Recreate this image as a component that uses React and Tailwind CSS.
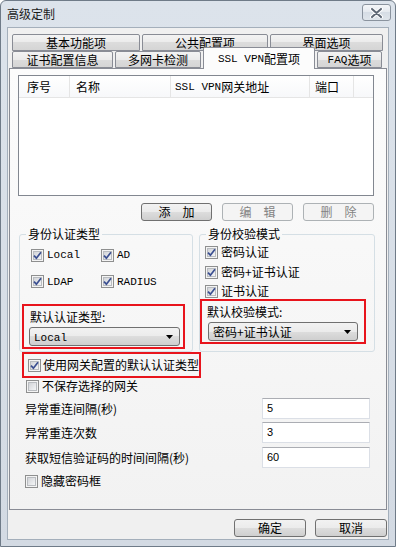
import React from 'react';

const CJK = "font-['Noto_Sans_CJK_SC','Liberation_Sans',sans-serif]";
const MONO = "font-['Liberation_Mono','Noto_Sans_CJK_SC',monospace] text-[11px]";

// win7 style checkbox
function Check({ checked = false }) {
  return (
    <span className="w-[13px] h-[13px] shrink-0 flex items-center justify-center border border-[#8e8f8f] bg-[#f4f4f4]">
      <span className="w-[9px] h-[9px] flex items-center justify-center border border-[#b9bcc0] bg-gradient-to-br from-[#d2d4d8] to-[#f4f5f6]">
        {checked && (
          <svg width="9" height="9" viewBox="0 0 9 9" className="overflow-visible">
            <path d="M1 4.6 L3.4 7.2 L8 1.2" fill="none" stroke="#3b4f91" strokeWidth="1.7" />
          </svg>
        )}
      </span>
    </span>
  );
}

function Combo({ children, w }) {
  return (
    <div
      className={`h-[19px] flex items-center justify-between pl-[4px] pr-[6px] border border-[#707070] rounded-[3px] bg-[linear-gradient(#f2f2f2,#ebebeb_50%,#dddddd_50%,#cfcfcf)] ${w}`}
    >
      <span className="leading-[14px]">{children}</span>
      <svg width="7" height="4" viewBox="0 0 7 4">
        <path d="M0 0H7L3.5 4Z" fill="#000" />
      </svg>
    </div>
  );
}

function Btn({ children, disabled, w = 'w-[71px]' }) {
  return (
    <div
      className={`h-[18px] flex items-center justify-center rounded-[3px] border leading-[14px] ${w} ${
        disabled
          ? 'border-[#adb2b5] bg-[#f4f4f4] text-[#838383]'
          : 'border-[#707070] bg-[linear-gradient(#f2f2f2,#ebebeb_50%,#dddddd_50%,#cfcfcf)] text-black'
      }`}
    >
      {children}
    </div>
  );
}

function Tab({ children, w }) {
  return (
    <div
      className={`h-[17px] flex items-center justify-center border border-[#898c95] rounded-t-[2px] bg-[linear-gradient(#f3f3f3,#ebebeb_50%,#dcdcdc_50%,#d5d5d5)] leading-[14px] ${w}`}
    >
      {children}
    </div>
  );
}

function Field({ label, value, mt }) {
  return (
    <div className={`ml-[15px] w-[345px] flex items-center justify-between ${mt}`}>
      <span className="leading-[14px]">{label}</span>
      <div className="w-[108px] h-[21px] flex items-center pl-[4px] border border-[#dbdfe6] border-t-[#abadb3] bg-white font-['Liberation_Sans',sans-serif] text-[11px]">
        {value}
      </div>
    </div>
  );
}

export default function App() {
  return (
    <div className={`w-[396px] h-[547px] flex flex-col bg-[linear-gradient(#dce3eb,#d3dae3)] border border-[#6f7b88] rounded-t-[6px] text-[12px] text-black ${CJK}`}>
      {/* title bar */}
      <div className="h-[26px] shrink-0 flex justify-between pl-[6px] pr-[4px]">
        <span className="self-center leading-[14px] text-[12px] text-[#1b1b1b]">高级定制</span>
        <div className="mt-[3px] w-[29px] h-[17px] flex items-center justify-center rounded-[3px] border border-[#8a939e] bg-[linear-gradient(#f4f6f8,#e3e8ee_50%,#d6dde5_50%,#dfe5eb)]">
          <svg width="13" height="10" viewBox="0 0 13 10">
            <path d="M2 1 L11 9 M11 1 L2 9" stroke="#fff" strokeWidth="4" strokeLinecap="round" />
            <path d="M2 1 L11 9 M11 1 L2 9" stroke="#5e6875" strokeWidth="2" strokeLinecap="round" />
          </svg>
        </div>
      </div>

      {/* client */}
      <div className="flex-1 ml-[6px] mr-[6px] mb-[6px] flex flex-col border border-[#a4afbb] bg-[#f0f0f0]">
        <div className="ml-[1px] w-[378px] flex flex-col">
          <div className="mt-[6px] pl-[3px] flex gap-[2px]">
            <Tab w="w-[128px]">基本功能项</Tab>
            <Tab w="w-[126px]">公共配置项</Tab>
            <Tab w="w-[113px]">界面选项</Tab>
          </div>
          <div className="h-[17px] pl-[3px] flex items-end gap-[2px]">
            <Tab w="w-[101px]">证书配置信息</Tab>
            <Tab w="w-[86px]">多网卡检测</Tab>
            <div className="relative z-10 w-[112px] h-[22px] -mb-[1px] flex items-center justify-center border border-b-0 border-[#898c95] rounded-t-[2px] bg-[#fcfcfc] leading-[14px]">
              <span className={MONO}>SSL VPN</span>配置项
            </div>
            <Tab w="w-[65px]">
              <span className={MONO}>FAQ</span>选项
            </Tab>
          </div>

          {/* tab page */}
          <div className="h-[442px] flex flex-col border border-[#898c95] bg-[linear-gradient(#fcfcfc,#f2f2f2)]">
            {/* list view */}
            <div className="mt-[6px] ml-[8px] w-[356px] h-[121px] border border-[#828790] bg-white">
              <div className="h-[22px] flex bg-[linear-gradient(#ffffff,#f7f8fa)] border-b border-[#e5e5e5]">
                <div className="w-[51px] pl-[8px] flex items-center border-r border-[#e5e5e5] leading-[14px]">序号</div>
                <div className="w-[101px] pl-[6px] flex items-center border-r border-[#e5e5e5] leading-[14px]">名称</div>
                <div className="w-[139px] pl-[4px] flex items-center border-r border-[#e5e5e5] leading-[14px]">
                  <span className={MONO}>SSL VPN</span>网关地址
                </div>
                <div className="w-[44px] pl-[5px] flex items-center border-r border-[#e5e5e5] leading-[14px]">端口</div>
              </div>
            </div>

            {/* buttons */}
            <div className="mt-[7px] ml-[8px] w-[356px] flex justify-end gap-[10px]">
              <Btn>添　加</Btn>
              <Btn disabled>编　辑</Btn>
              <Btn disabled>删　除</Btn>
            </div>

            {/* group boxes */}
            <div className="mt-[6px] ml-[9px] flex gap-[6px] items-stretch">
              <fieldset className="w-[174px] border border-[#d5dfe5] rounded-[3px] pb-[2px]">
                <legend className="ml-[6px] px-[2px] leading-[14px]">身份认证类型</legend>
                <div className="mt-[6px] pl-[11px] flex">
                  <div className="w-[70px] flex items-center gap-[3px]">
                    <Check checked />
                    <span className={MONO}>Local</span>
                  </div>
                  <div className="flex items-center gap-[3px]">
                    <Check checked />
                    <span className={MONO}>AD</span>
                  </div>
                </div>
                <div className="mt-[10px] pl-[11px] flex">
                  <div className="w-[70px] flex items-center gap-[3px]">
                    <Check checked />
                    <span className={MONO}>LDAP</span>
                  </div>
                  <div className="flex items-center gap-[3px]">
                    <Check checked />
                    <span className={MONO}>RADIUS</span>
                  </div>
                </div>
                <div className="mt-[14px] ml-[2px] w-[163px] h-[45px] border-2 border-[#e8141c] pt-[4px]">
                  <div className="pl-[6px] leading-[14px]">默认认证类型:</div>
                  <Combo w="mt-[3px] ml-[5px] w-[151px]">
                    <span className={MONO}>Local</span>
                  </Combo>
                </div>
              </fieldset>

              <fieldset className="w-[176px] border border-[#d5dfe5] rounded-[3px] pb-[2px]">
                <legend className="ml-[6px] px-[2px] leading-[14px]">身份校验模式</legend>
                <div className="mt-[4px] pl-[5px] flex items-center gap-[3px]">
                  <Check checked />
                  <span className="leading-[14px]">密码认证</span>
                </div>
                <div className="mt-[6px] pl-[5px] flex items-center gap-[3px]">
                  <Check checked />
                  <span className="leading-[14px]">密码+证书认证</span>
                </div>
                <div className="mt-[5px] pl-[5px] flex items-center gap-[3px]">
                  <Check checked />
                  <span className="leading-[14px]">证书认证</span>
                </div>
                <div className="mt-[1px] w-[166px] h-[45px] border-2 border-[#e8141c] pt-[4px]">
                  <div className="pl-[5px] leading-[14px]">默认校验模式:</div>
                  <Combo w="mt-[3px] ml-[6px] w-[150px]">密码+证书认证</Combo>
                </div>
              </fieldset>
            </div>

            {/* gateway default */}
            <div className="ml-[12px] w-[179px] h-[26px] flex items-center gap-[2px] pl-[4px] border-2 border-[#e8141c]">
              <Check checked />
              <span className="leading-[14px]">使用网关配置的默认认证类型</span>
            </div>

            <div className="mt-[1px] ml-[16px] flex items-center gap-[3px]">
              <Check />
              <span className="leading-[14px]">不保存选择的网关</span>
            </div>

            <Field label="异常重连间隔(秒)" value="5" mt="mt-[5px]" />
            <Field label="异常重连次数" value="3" mt="mt-[3px]" />
            <Field label="获取短信验证码的时间间隔(秒)" value="60" mt="mt-[4px]" />

            <div className="mt-[6px] ml-[15px] flex items-center gap-[3px]">
              <Check />
              <span className="leading-[14px]">隐藏密码框</span>
            </div>
          </div>
        </div>

        {/* dialog buttons */}
        <div className="mt-[9px] pr-[1px] flex justify-end gap-[9px]">
          <Btn w="w-[72px]">确定</Btn>
          <Btn w="w-[72px]">取消</Btn>
        </div>
      </div>
    </div>
  );
}
